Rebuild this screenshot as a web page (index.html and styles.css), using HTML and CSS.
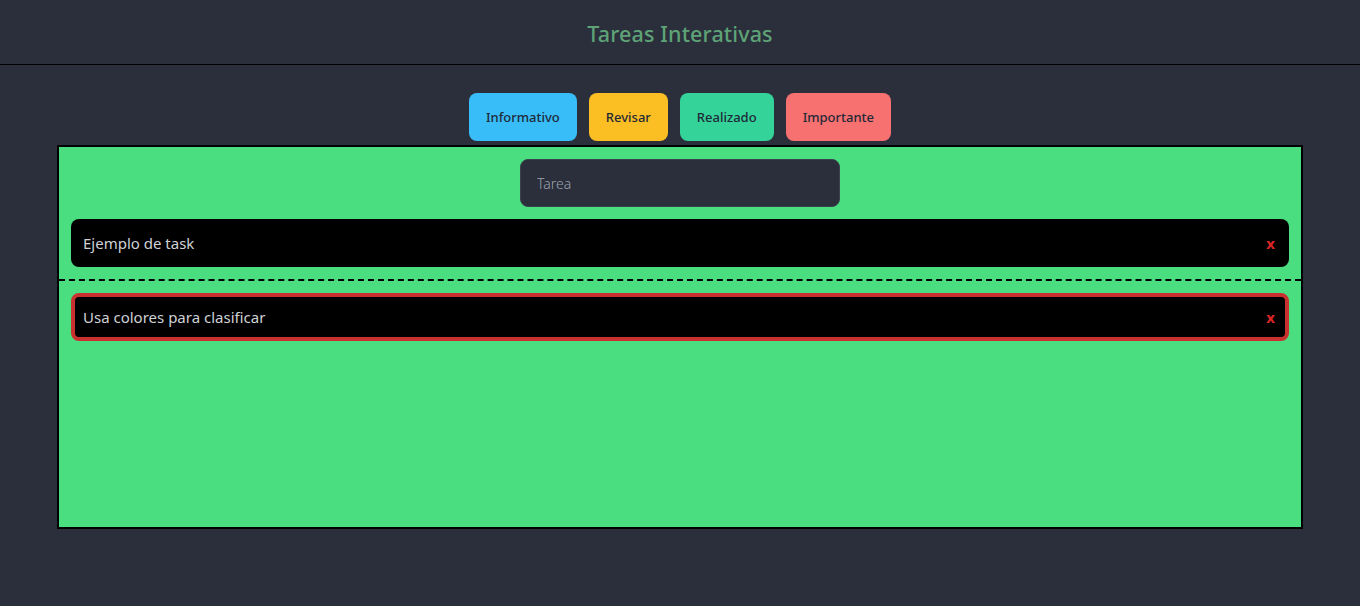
FILE: index.html
```html
<!DOCTYPE html>
<html lang="es">
<head>
<meta charset="utf-8">
<title>Tareas Interativas</title>
<link rel="stylesheet" href="styles.css">
</head>
<body>
<header class="header">
  <h1 class="title">Tareas Interativas</h1>
</header>
<nav class="filters">
  <button class="chip chip-info">Informativo</button>
  <button class="chip chip-review">Revisar</button>
  <button class="chip chip-done">Realizado</button>
  <button class="chip chip-important">Importante</button>
</nav>
<main class="board">
  <section class="section section-top">
    <input class="task-input" type="text" placeholder="Tarea">
    <div class="task">
      <span class="task-text">Ejemplo de task</span>
      <span class="task-remove">x</span>
    </div>
  </section>
  <section class="section">
    <div class="task task-important">
      <span class="task-text">Usa colores para clasificar</span>
      <span class="task-remove">x</span>
    </div>
  </section>
</main>
</body>
</html>
```
FILE: styles.css
```css
* { box-sizing: border-box; }
html, body {
  margin: 0;
  padding: 0;
  background: #2a2f3b;
  font-family: "Noto Sans", "Open Sans", sans-serif;
}
.header {
  height: 65px;
  border-bottom: 1px solid #000;
  display: flex;
  align-items: center;
  justify-content: center;
  padding-top: 2px;
}
.title {
  margin: 0;
  font-size: 21.5px;
  font-weight: 500;
  color: #5ea377;
  letter-spacing: 0.15px;
}
.filters {
  display: flex;
  justify-content: center;
  gap: 12px;
  padding-top: 28px;
  height: 80px;
}
.chip {
  height: 48px;
  border: none;
  border-radius: 8px;
  padding: 0 17px;
  font-family: inherit;
  font-size: 13px;
  font-weight: 500;
  color: #1f2937;
  cursor: pointer;
}
.chip-info { background: #38bdf8; }
.chip-review { background: #fbbf24; }
.chip-done { background: #34d399; }
.chip-important { background: #f87171; }
.board {
  margin: 0 57px;
  height: 384px;
  background: #4ade80;
  border: 2px solid #000;
}
.section {
  padding: 12px;
  display: flex;
  flex-direction: column;
  gap: 12px;
}
.section-top {
  border-bottom: 2px dashed #000;
  align-items: stretch;
}
.task-input {
  align-self: center;
  width: 320px;
  height: 48px;
  background: #2a2f3b;
  border: 1px solid #3a404c;
  border-radius: 8px;
  padding: 0 16px;
  font-family: inherit;
  font-size: 14px;
  font-weight: 300;
  color: #d1d5db;
}
.task-input::placeholder { color: #9ca3af; }
.task {
  height: 48px;
  background: #000;
  border-radius: 8px;
  display: flex;
  align-items: center;
  justify-content: space-between;
  padding: 0 12px;
  color: #cfd2d7;
  font-size: 15px;
}
.task-important {
  border: 4px solid #c93030;
  padding: 0 8px;
}
.task-remove {
  color: #dc2626;
  font-weight: 700;
  font-size: 15px;
  padding-right: 2px;
}
```
